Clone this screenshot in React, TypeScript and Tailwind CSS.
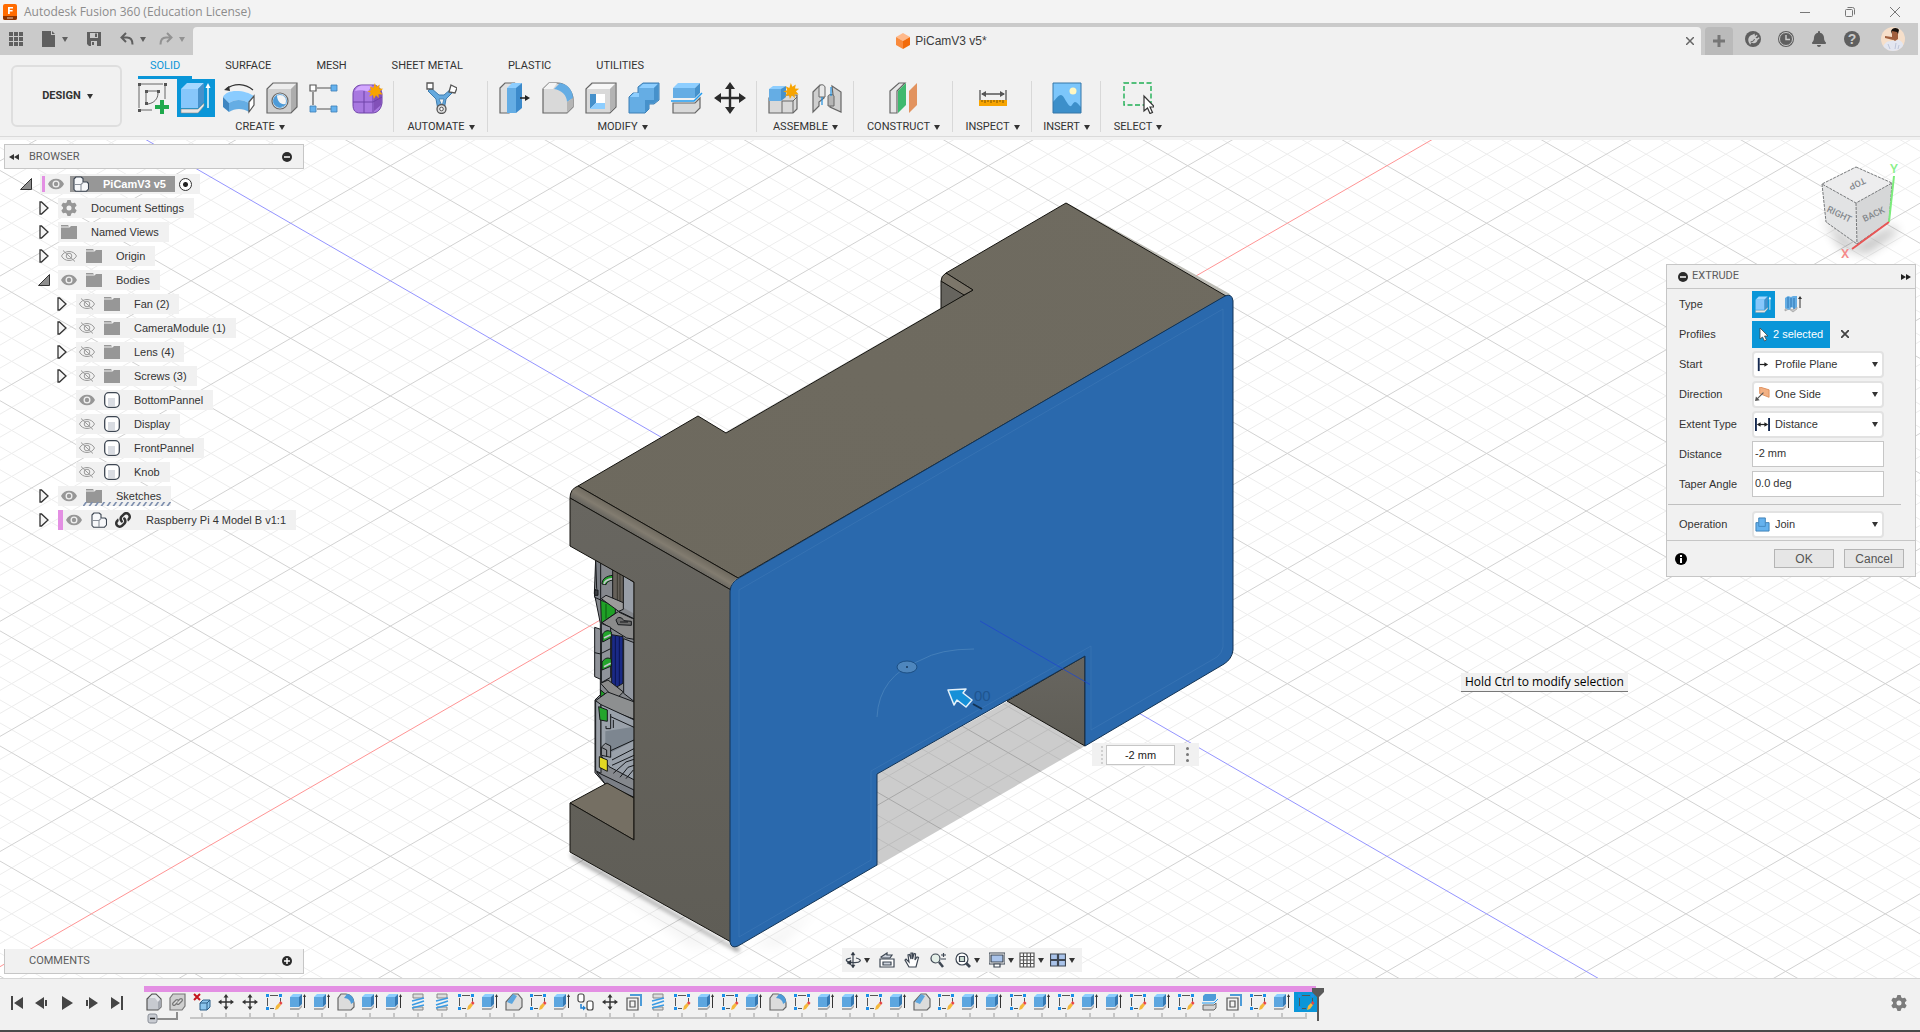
import type { ReactNode } from "react";
import { FaBell, FaLink } from "react-icons/fa";
import { FaGear } from "react-icons/fa6";

/* ---------- shared bits ---------- */

type IconProps = { className?: string };

const Caret = ({ className = "" }: IconProps) => (
  <svg viewBox="0 0 6 5" className={`w-[6px] h-[5px] shrink-0 ${className}`} fill="currentColor">
    <path d="M0 0h6L3 5z" />
  </svg>
);

const Star = () => (
  <path
    d="M23 1l1.6 4 3.6-2.4-.8 4.2 4.4.4-3.4 2.6 2.8 3.4-4.4-.4.4 4.2-3-3-2.2 3.8-1-4.2-4 1.6 1.8-3.8-3.8-1.6 4.2-1.2-1.6-4 3.8 1.6z"
    fill="#f7a400"
    transform="translate(1 0) scale(.95)"
  />
);

/* ---------- ribbon icons (32 x 32 grid) ---------- */

const SketchIcon = () => (
  <>
    <g fill="none" stroke="#666" strokeWidth="1">
      <path d="M4 2h22M2 4v22M28 4v13M4 28h11" />
      <path d="M9 11v9M11 9h9M21 11c0 6-4 10-10 11" />
    </g>
    <path fill="#555" d="M1 1h3v3H1zM27 1h3v3h-3zM1 27h3v3H1zM8 8h3v3H8zM20 8h3v3h-3zM8 20h3v3H8z" />
    <path fill="#1fa94c" d="M23 18h4v5h5v4h-5v5h-4v-5h-5v-4h5z" />
  </>
);

const ExtrudeIcon = () => (
  <>
    <path d="M1 27h17l6-6v3l-6 7H1z" fill="#e6e6e6" stroke="#888" strokeWidth=".6" />
    <path d="M1 7l6-6h17l-6 6z" fill="#a5d8ff" />
    <path d="M1 7h17v19H1z" fill="#87c7fb" />
    <path d="M18 7l6-6v19l-6 6z" fill="#4691cb" />
    <path d="M28 4v22" stroke="#fff" strokeWidth="1.4" />
    <path d="M25.5 6h5L28 1z" fill="#fff" />
  </>
);

const RevolveIcon = () => (
  <>
    <path d="M3 7c8-6 19-6 27 1" fill="none" stroke="#333" strokeWidth="1.2" />
    <path d="M1 8l5-4 1 5z" fill="#333" />
    <path d="M0 15c2-4 7-6 13-6 8 0 13 2 18 5l-5 7c-7-4-14-4-20 0z" fill="#8accff" />
    <path d="M0 15l6 6v9l-6-5z" fill="#3f86c1" />
    <path d="M6 21c6-4 13-4 20 0v9c-6-4-14-4-20 0z" fill="#65ade4" />
    <path d="M26 20l5-6v9l-5 7z" fill="#fff" stroke="#555" strokeWidth="1.2" />
  </>
);

const HoleIcon = () => (
  <>
    <path d="M1 7l6-6h24v24l-6 6H1z" fill="#cfcfcf" />
    <path d="M1 7l6-6h24l-6 6z" fill="#ededed" />
    <path d="M25 7l6-6v24l-6 6z" fill="#adadad" />
    <path d="M1 7l6-6h24v24l-6 6H1z" fill="none" stroke="#666" strokeWidth="1.2" />
    <circle cx="14" cy="19" r="8" fill="#f4f4f4" stroke="#666" strokeWidth="1.2" />
    <path d="M11 13a6.500 6.500 0 1 0 8.500 9c-5 1-8.500-3-8.500-9z" fill="#4d9bd8" />
    <circle cx="14" cy="19" r="6.5" fill="none" stroke="#4d9bd8" strokeWidth=".8" />
  </>
);

const PatternIcon = () => (
  <>
    <path d="M8 6h14M4 10v13M8 27h14" stroke="#555" strokeWidth="1.2" />
    <path d="M1 3h6v6H1z" fill="#fff" stroke="#555" strokeWidth="1.2" />
    <path d="M22 3h6v6h-6zM1 24h6v6H1zM22 24h6v6h-6z" fill="#65b2ee" stroke="#3c7fb5" strokeWidth=".8" />
  </>
);

const FormIcon = () => (
  <>
    <path d="M1 12c0-5 3-9 9-9h12c5 1 8 5 8 10v8c-1 6-4 10-10 10H8c-5 0-7-3-7-8z" fill="#a878e0" stroke="#6f42a8" />
    <path d="M3 9c2-4 4-5.500 8-5.500h9l-4 6C11 8 7 8 3 9z" fill="#d3a8ff" />
    <path d="M22 12l7-5c1 3 1 11 0 16l-7 6z" fill="#8250b8" />
    <path d="M12 9v22M1 20h20l9-5M21 10v20" fill="none" stroke="#6f42a8" />
    <Star />
  </>
);

const AutomateIcon = () => (
  <>
    <path d="M6 6l8 7h5l7-6 2 3-7 7-2 11h-6l-2-11-8-8z" fill="#65a9de" stroke="#3e7cae" />
    <path d="M14 17h5l-2 7z" fill="#f1f1f1" stroke="#3e7cae" strokeWidth=".8" />
    <path d="M2 1h6v6H2z" fill="#fff" stroke="#555" strokeWidth="1.3" />
    <path d="M26 3l6 3-2 5-6-1z" fill="#fff" stroke="#555" strokeWidth="1.3" />
    <circle cx="16.5" cy="27" r="4.5" fill="#ddd" stroke="#555" strokeWidth="1.3" />
    <circle cx="16.5" cy="27" r="1.8" fill="#fff" stroke="#555" />
  </>
);

const PressPullIcon = () => (
  <>
    <path d="M1 6l5-5h9l-5 5v25H1z" fill="#e0e0e0" stroke="#666" strokeWidth="1.2" />
    <path d="M8 6l5-5h10l-5 5z" fill="#8dceff" />
    <path d="M8 6h9v25H8z" fill="#65ade4" />
    <path d="M17 6l6-5v25l-6 5z" fill="#3c8acb" />
    <path d="M21 16h7" stroke="#222" strokeWidth="1.5" />
    <path d="M26 13l5 3-5 3z" fill="#222" />
  </>
);

const FilletIcon = () => (
  <>
    <path d="M1 7l6-6h8c9 0 16 8 16 17v7l-6 6H1z" fill="#d9d9d9" stroke="#666" strokeWidth="1.2" />
    <path d="M12 7l6-6c8 1 13 8 13 15l-6 4c0-7-6-12-13-13z" fill="#65ade4" />
    <path d="M25 20l6-4v9l-6 6z" fill="#b5b5b5" />
    <path d="M1 7l6-6h8L11 7z" fill="#f4f4f4" />
  </>
);

const ShellIcon = () => (
  <>
    <path d="M1 7l6-6h24v24l-6 6H1z" fill="#d9d9d9" stroke="#666" strokeWidth="1.2" />
    <path d="M2 7l6-5h22l-5 5z" fill="#f7f7f7" />
    <path d="M25 7l5-5v23l-5 5z" fill="#b3b3b3" />
    <path d="M5 12h15v15H5z" fill="#fff" />
    <path d="M5 12h6v9l-6 6z" fill="#4691cb" />
    <path d="M5 27l6-6h9v6z" fill="#8dceff" />
  </>
);

const CombineIcon = () => (
  <>
    <path d="M10 5l5-4h16v17l-5 4h-5v5l-4 4H1V15l4-4h5z" fill="#65ade4" stroke="#3c7fb5" />
    <path d="M11 6l4-4h15l-4 4zM2 15l4-4h5v4z" fill="#8dceff" />
    <path d="M26 6l4-4v16l-4 3h-5v6l-4 3V18h9z" fill="#4691cb" />
  </>
);

const SplitIcon = () => (
  <>
    <path d="M2 6l5-5h22l-5 5z" fill="#8dceff" />
    <path d="M2 6h22v10H2z" fill="#65ade4" />
    <path d="M24 6l5-5v10l-5 5z" fill="#4691cb" />
    <path d="M2 21h22l5-5v10l-5 5H2z" fill="#d9d9d9" stroke="#666" strokeWidth="1.2" />
    <path d="M0 19h23l8-8" fill="none" stroke="#1f9bf0" strokeWidth="1.5" />
  </>
);

const MoveIcon = () => (
  <>
    <path d="M16 4v24M4 16h24" stroke="#2b2b2b" strokeWidth="2.4" />
    <path d="M16 0l5 7H11zM16 32l5-7H11zM0 16l7-5v10zM32 16l-7-5v10z" fill="#2b2b2b" />
  </>
);

const ComponentIcon = () => (
  <>
    <path d="M1 16l4-3h24v14l-4 4H1z" fill="#d9d9d9" stroke="#666" strokeWidth="1.2" />
    <path d="M14 19v12M14 19h11l4-4M25 19v12" fill="none" stroke="#666" />
    <path d="M1 7l4-3h13l-4 3z" fill="#8dceff" />
    <path d="M1 7h12v12H1z" fill="#65ade4" />
    <path d="M13 7l5-3v11l-5 4z" fill="#4691cb" />
    <Star />
  </>
);

const JointIcon = () => (
  <>
    <path d="M2 10l7-7 4 3v10l-5 4v4l-6 6z" fill="#cfcfcf" stroke="#666" strokeWidth="1.2" />
    <path d="M21 4l9 6v20l-11-5V14l3-1z" fill="#cfcfcf" stroke="#666" strokeWidth="1.2" />
    <path d="M8 5c1-3 5-3 6 0v10H8z" fill="#e8e8e8" stroke="#666" />
    <path d="M17 14c1-2 5-2 6 0v10h-6z" fill="#b5b5b5" stroke="#666" />
    <path d="M11 15v8M20 5v9" stroke="#1f8fe0" strokeWidth="1.2" />
  </>
);

const ConstructIcon = () => (
  <>
    <path d="M2 9l9-8h6L9 9v22H2z" fill="#e6e6e6" stroke="#666" strokeWidth="1.2" />
    <path d="M10 9l8-8v22l-8 8z" fill="#3fb96e" />
    <path d="M21 9l8-8v22l-8 8z" fill="#e2935f" />
  </>
);

const InspectIcon = () => (
  <>
    <path d="M3 8v10M29 8v10M5 12h22" fill="none" stroke="#555" strokeWidth="1.3" />
    <path d="M4 12l5-3v6zM28 12l-5-3v6z" fill="#555" />
    <path d="M2 18h28v6H2z" fill="#f7a400" />
    <path d="M5 18v2M8 18v3M11 18v2M14 18v3M17 18v2M20 18v3M23 18v2M26 18v3" stroke="#7a5200" />
  </>
);

const InsertIcon = () => (
  <>
    <path d="M2 1h28v30H2z" fill="#7cc6fb" />
    <circle cx="22" cy="9" r="3.5" fill="#fff7c2" />
    <path d="M2 20c3-3 5-7 8-7s6 10 9 11c2 1 3-4 5-4s4 3 6 5v6H2z" fill="#3c8fca" />
    <path d="M2 1h28v30H2z" fill="none" stroke="#3577a8" />
  </>
);

const SelectIcon = () => (
  <>
    <path d="M2 1h27v22H2z" fill="none" stroke="#1faf54" strokeWidth="1.4" strokeDasharray="5 2.5" />
    <path d="M22 14v15l3.500-3 2.500 5.500 2.500-1-2.500-5.500h4.500z" fill="#fff" stroke="#333" strokeWidth="1.2" />
  </>
);

type Group = { label: string; width: string; icons: { name: string; art: ReactNode; active?: boolean }[] };

const groups: Group[] = [
  {
    label: "CREATE",
    width: "w-[268px]",
    icons: [
      { name: "Create Sketch", art: <SketchIcon /> },
      { name: "Extrude", art: <ExtrudeIcon />, active: true },
      { name: "Revolve", art: <RevolveIcon /> },
      { name: "Hole", art: <HoleIcon /> },
      { name: "Rectangular Pattern", art: <PatternIcon /> },
      { name: "Create Form", art: <FormIcon /> },
    ],
  },
  { label: "AUTOMATE", width: "w-[94px]", icons: [{ name: "Automated Modeling", art: <AutomateIcon /> }] },
  {
    label: "MODIFY",
    width: "w-[269px]",
    icons: [
      { name: "Press Pull", art: <PressPullIcon /> },
      { name: "Fillet", art: <FilletIcon /> },
      { name: "Shell", art: <ShellIcon /> },
      { name: "Combine", art: <CombineIcon /> },
      { name: "Split Body", art: <SplitIcon /> },
      { name: "Move/Copy", art: <MoveIcon /> },
    ],
  },
  {
    label: "ASSEMBLE",
    width: "w-[97px]",
    icons: [
      { name: "New Component", art: <ComponentIcon /> },
      { name: "Joint", art: <JointIcon /> },
    ],
  },
  { label: "CONSTRUCT", width: "w-[99px]", icons: [{ name: "Offset Plane", art: <ConstructIcon /> }] },
  { label: "INSPECT", width: "w-[79px]", icons: [{ name: "Measure", art: <InspectIcon /> }] },
  { label: "INSERT", width: "w-[69px]", icons: [{ name: "Canvas", art: <InsertIcon /> }] },
  { label: "SELECT", width: "w-[74px]", icons: [{ name: "Select Window", art: <SelectIcon /> }] },
];

const tabs = ["SOLID", "SURFACE", "MESH", "SHEET METAL", "PLASTIC", "UTILITIES"];

/* ---------- header ---------- */

function TitleBar() {
  return (
    <div className="flex items-center h-[23px] shrink-0 bg-[#f3f3f3]">
      <svg viewBox="0 0 14 16" className="w-[14px] h-4 ml-[3px] shrink-0">
        <rect width="14" height="16" rx="2" fill="#ff6b00" />
        <path d="M0 12h14v2a2 2 0 0 1-2 2H2a2 2 0 0 1-2-2z" fill="#8a3200" />
        <path d="M5 10V3h5v1.500H6.800v1.600h2.800v1.400H6.800V10z" fill="#fff" />
        <path d="M4 14h6" stroke="#e8c9b0" />
      </svg>
      <h1 className="ml-[7px] text-[12px] text-[#8c8c8c] font-['Open_Sans','Noto_Sans',sans-serif]">
        Autodesk Fusion 360 (Education License)
      </h1>
      <div className="flex ml-auto mr-[2px] text-[#777]">
        <button aria-label="Minimize" className="flex w-[45px] h-5 items-center justify-center">
          <svg viewBox="0 0 12 12" className="w-3 h-3" stroke="currentColor" fill="none"><path d="M1 6.500h10" /></svg>
        </button>
        <button aria-label="Restore" className="flex w-[45px] h-5 items-center justify-center">
          <svg viewBox="0 0 12 12" className="w-3 h-3" stroke="currentColor" fill="none">
            <rect x="1.5" y="3.5" width="7" height="7" rx="1" />
            <path d="M3.500 1.500h5a2 2 0 0 1 2 2v5" />
          </svg>
        </button>
        <button aria-label="Close" className="flex w-[46px] h-5 items-center justify-center">
          <svg viewBox="0 0 12 12" className="w-3 h-3" stroke="currentColor" fill="none"><path d="M1 1l10 10M11 1L1 11" /></svg>
        </button>
      </div>
    </div>
  );
}

function QuickBar() {
  return (
    <div className="flex h-8 shrink-0 mr-[2px] bg-[#cacaca] text-[#5f5f5f]">
      <div className="flex items-center w-[193px] shrink-0">
        <button aria-label="Data Panel" className="ml-[9px]">
          <svg viewBox="0 0 14 14" className="w-[14px] h-[14px]" fill="currentColor">
            <path d="M0 0h4v4H0zM5 0h4v4H5zM10 0h4v4h-4zM0 5h4v4H0zM5 5h4v4H5zM10 5h4v4h-4zM0 10h4v4H0zM5 10h4v4H5zM10 10h4v4h-4z" />
          </svg>
        </button>
        <button aria-label="File" className="flex items-center gap-[7px] ml-[19px]">
          <svg viewBox="0 0 13 16" className="w-[13px] h-4" fill="currentColor"><path d="M0 0h9v4h4v12H0zM10 0l3 3h-3z" /></svg>
          <Caret />
        </button>
        <button aria-label="Save" className="ml-[19px]">
          <svg viewBox="0 0 14 14" className="w-[14px] h-[14px]">
            <path d="M0 0h14v14H2l-2-2z" fill="#5f5f5f" />
            <path d="M3 1h8v5H3zM4 9h6v5H4z" fill="#cacaca" />
            <path d="M8 1.500h2V5H8zM5 10h2v3H5z" fill="#5f5f5f" />
          </svg>
        </button>
        <button aria-label="Undo" className="flex items-center gap-[6px] ml-[19px]">
          <svg viewBox="0 0 14 14" className="w-[14px] h-[14px]" fill="none" stroke="currentColor" strokeWidth="2">
            <path d="M6 1L1.500 5.500 6 10M2 5.500h5c3.500 0 5.500 2.500 5.500 7" />
          </svg>
          <Caret />
        </button>
        <button aria-label="Redo" className="flex items-center gap-[6px] ml-[13px] text-[#929292]">
          <svg viewBox="0 0 14 14" className="w-[14px] h-[14px]" fill="none" stroke="currentColor" strokeWidth="2">
            <path d="M8 1l4.500 4.500L8 10M12 5.500H7C3.500 5.500 1.500 8 1.500 12.500" />
          </svg>
          <Caret />
        </button>
      </div>
      <div className="flex flex-1 items-center mt-1 bg-[#f1f1f1] rounded-t">
        <div className="flex flex-1 items-center justify-center gap-[5px] pl-1 text-[12px] text-[#3c3c3c]">
          <svg viewBox="0 0 14 16" className="w-[14px] h-4">
            <path d="M7 0l7 4-7 4-7-4z" fill="#ffb98a" />
            <path d="M0 4l7 4v8l-7-4z" fill="#f98a3c" />
            <path d="M14 4L7 8v8l7-4z" fill="#f26a0a" />
          </svg>
          <span>PiCamV3 v5*</span>
        </div>
        <button aria-label="Close tab" className="mr-[7px] text-[#666]">
          <svg viewBox="0 0 8 8" className="w-2 h-2" stroke="currentColor" strokeWidth="1.5"><path d="M0 0l8 8M8 0L0 8" /></svg>
        </button>
      </div>
      <button aria-label="New tab" className="flex items-center justify-center w-7 mt-1 ml-1 bg-[#bababa] rounded-t text-[#767676]">
        <svg viewBox="0 0 12 12" className="w-3 h-3" stroke="currentColor" strokeWidth="3"><path d="M6 0v12M0 6h12" /></svg>
      </button>
      <div className="flex items-center gap-[17px] pl-3 pr-[13px]">
        <button aria-label="Extensions">
          <svg viewBox="0 0 16 16" className="w-4 h-4">
            <circle cx="8" cy="8" r="8" fill="#5f5f5f" />
            <path d="M4.500 12.500C2 9 3.500 4 8 3.500l1.500-1 .5 2.500 2-1.500.5 1.500-2 1.500 1.500 1 2-1.500.5 1.500-2 1.500c0 3-4 4-6 2.500L5 14z" fill="#cacaca" />
            <path d="M5.500 11l3-1 1-2" stroke="#5f5f5f" strokeWidth="1" fill="none" />
          </svg>
        </button>
        <button aria-label="Job Status">
          <svg viewBox="0 0 16 16" className="w-4 h-4">
            <circle cx="8" cy="8" r="8" fill="#5f5f5f" />
            <circle cx="8" cy="8" r="6.5" fill="none" stroke="#cacaca" />
            <path d="M8 4v4.500h4" stroke="#cacaca" strokeWidth="1.5" fill="none" />
          </svg>
        </button>
        <button aria-label="Notifications"><FaBell className="w-4 h-4" /></button>
        <button aria-label="Help" className="w-4 h-4 rounded-full bg-[#5f5f5f] text-[#cacaca] text-[14px] leading-4 font-bold">?</button>
        <button aria-label="Account" className="ml-1">
          <svg viewBox="0 0 24 24" className="w-6 h-6">
            <clipPath id="face"><circle cx="12" cy="12" r="12" /></clipPath>
            <g clipPath="url(#face)">
              <path d="M0 0h24v24H0z" fill="#f6dfca" />
              <path d="M2 24c-1-7 4-10 8-10l8-1c5 2 5 7 3 11z" fill="#e3e6f0" />
              <path d="M4 9l7 1 1 3-8-2zM11 4h6v8l-3 2-3-2z" fill="#a05f3e" />
              <path d="M10 5c0-5 7-5 8-2l-1 4-1-2-5-1-1 3z" fill="#17120f" />
              <path d="M7 17l2 5M15 16l-1 6M18 18l-1 4" stroke="#bcc4d8" />
            </g>
          </svg>
        </button>
      </div>
    </div>
  );
}

function Ribbon() {
  return (
    <div className="flex h-[82px] shrink-0 bg-[#f1f1f1] border-b border-[#dadada] font-[Roboto,Arial,sans-serif] text-[11px] text-[#333]">
      <button className="flex items-center justify-center gap-[6px] w-[111px] h-[62px] mt-[10px] ml-[11px] pl-[2px] pt-px border-2 border-[#dedede] rounded-md font-bold">
        DESIGN <Caret />
      </button>
      <div className="flex flex-col ml-1">
        <div role="tablist" className="flex gap-[21px] h-6 pl-3">
          {tabs.map((tab, i) => (
            <button
              key={tab}
              role="tab"
              aria-selected={i === 0}
              className={
                i === 0
                  ? "px-3 border-b-[3px] border-[#0a96d8] text-[#0a96d8] leading-[22px]"
                  : "px-3 border-b-[3px] border-transparent leading-[22px]"
              }
            >
              {tab}
            </button>
          ))}
        </div>
        <div className="flex flex-1">
          {groups.map((group, i) => (
            <div key={group.label} className={`relative flex flex-col items-center ${group.width}`}>
              <div className="flex gap-[5px]">
                {group.icons.map((icon) => (
                  <button
                    key={icon.name}
                    aria-label={icon.name}
                    className={`flex items-center justify-center w-[38px] h-[38px] ${icon.active ? "bg-[#0a96d8]" : ""}`}
                  >
                    <svg viewBox="0 0 32 32" className="w-8 h-8">{icon.art}</svg>
                  </button>
                ))}
              </div>
              <button className="flex items-center gap-1 leading-5">
                {group.label} <Caret />
              </button>
              {i < groups.length - 1 && <span className="absolute right-0 top-[2px] w-px h-[51px] bg-[#d8d8d8]" />}
            </div>
          ))}
        </div>
      </div>
    </div>
  );
}

/* ---------- 3D canvas ---------- */

// isometric ground grid: origin and one major step along each axis
const OX = 789;
const OY = 511;
const DX = 99.66;
const DY = 57.55;

function gridPath(major: boolean) {
  const parts: string[] = [];
  const rise = (DY / DX) * 1400;
  for (let i = -110; i <= 110; i++) {
    if ((i % 5 === 0) !== major || i === 0) continue;
    // every line crosses the vertical through the origin at a multiple of the spacing
    const y = OY + (i / 5) * 2 * DY;
    parts.push(`M${OX - 1400} ${y - rise}L${OX + 1400} ${y + rise}`);
    parts.push(`M${OX - 1400} ${y + rise}L${OX + 1400} ${y - rise}`);
  }
  return parts.join("");
}

const minorGrid = gridPath(false);
const majorGrid = gridPath(true);

const Connectors = () => (
  <g transform="translate(580 540) scale(.3333)" stroke="#15171a" strokeWidth="3" strokeLinejoin="round">
    <path d="M47 58l116 70v648l-86-42-32-36V480l16-16V250l-18-90z" fill="#85888d" />
    <path d="M47 60l15 8v112l-18-8v-20l6-6z" fill="#7b7f86" />
    <path d="M44 150h10v16H44z" fill="#3b3e42" />
    {/* upper USB port */}
    <path d="M66 132c0-16 14-24 32-26v14c-12 2-18 6-20 14z" fill="#24a52c" />
    <path d="M72 132c2-10 12-14 26-16" fill="none" stroke="#c4c6cb" strokeWidth="5" />
    <path d="M98 88l32 14v88l-32-12z" fill="#66615a" />
    <path d="M112 96v88M120 100v86" stroke="#3a372f" />
    <path d="M132 108l28 20v92l-28-16z" fill="#989ea7" stroke="none" />
    <path d="M62 180l44 20v20l-42 30z" fill="#1fa026" />
    <path d="M78 192v44" stroke="#0d5a12" />
    <path d="M64 176l14-10 52 22v20l-14 6z" fill="#9b9b9b" />
    <path d="M66 248l50-34 46 22v62l-22-4z" fill="#8b8b8b" />
    <path d="M108 240c6-12 18-8 24 2l22 2v12l-40-2zM116 216l42 20M120 246h24" fill="#6c6c6c" />
    {/* lower USB port */}
    <path d="M64 250l28 12v150l-28 16z" fill="#8f939a" />
    <path d="M68 282c8-12 18-12 26-6v16l-26 14zM66 366c10-14 20-14 28-8v20l-28 12z" fill="#24a52c" />
    <path d="M72 294l20-10M72 380l20-10" fill="none" stroke="#c4c6cb" strokeWidth="5" />
    <path d="M64 340l28-14" />
    <path d="M44 262l18 6v150l-18-8zM44 338l18 4" fill="#8f9298" />
    <path d="M95 284l34 6v140l-20 12-14-10z" fill="#1a2a86" />
    <path d="M106 288v150M118 290v146" stroke="#0c1450" />
    <path d="M131 296l31 12v176l-31-24z" fill="#9297a0" />
    <path d="M62 430l22-10 46 36-14 14-20-2z" fill="#8b8b8b" />
    <path d="M62 450l14 12-14 10z" fill="#1fa026" />
    {/* ethernet jack */}
    <path d="M47 482l36-26 80 30v52l-100-38z" fill="#8d8f90" />
    <path d="M47 482l16 12v206l-16-8z" fill="#9ba0a8" />
    <path d="M63 494l100 46v180l-76-40-24-34z" fill="#9aa1aa" />
    <path d="M76 574l86-14v42l-66 34-20-22z" fill="#7d8690" stroke="none" />
    <path d="M92 522v44h-14v-8M92 530l70 32M100 540v24" fill="none" />
    <path d="M92 632l70-32M96 660l66-34M96 676l66-30" fill="none" />
    <path d="M100 700l38-34 24-8M120 712l24-30 18-6M138 716l22-26" fill="none" />
    <path d="M56 500l26 10v34l-22-4z" fill="#24a52c" />
    <path d="M64 622l12-12 16 8v34l-28-6z" fill="#8f9298" />
    <path d="M64 622l16 8v20" fill="none" />
    <path d="M58 650l24 10v34l-24-12z" fill="#e2d822" />
    <path d="M50 696l112 54v22l-88-42z" fill="#7b7f86" />
    <path d="M163 128v650" />
  </g>
);

const Model = () => (
  <g strokeLinejoin="round">
    <path d="M573 858L731 949l9 4 80-46-40 40H690z" fill="#000" opacity=".04" filter="url(#soft)" />
    <path d="M570 853l160 92 10 3-2 4-166-94z" fill="#000" opacity=".45" filter="url(#tight)" />
    <path d="M1067 203l163 91-2 4-162-94z" fill="#bdbcb5" />
    {/* cut-out: floor shadow and inner wall */}
    <path d="M877 774l131-73 77 45-208 120z" fill="#000" opacity=".2" />
    <path d="M1007 701l78-45v90z" fill="url(#side)" stroke="#14130f" />
    {/* recess behind the ports */}
    <path d="M607 783l27-20v77z" fill="#756f63" />
    <Connectors />
    <path d="M570 803l37-20 27 15v42z" fill="#756f63" stroke="#14130f" />
    <path d="M941 281v28l24-14z" fill="#66645e" stroke="#14130f" />
    {/* top */}
    <path
      d="M578 486l120-70 28 17 247-143-27-17 120-70 160 93-488 282z"
      fill="url(#top)"
      stroke="#14130f"
    />
    <path d="M941 281q0-5 5-8l27 17-9 5z" fill="#7c766a" stroke="#14130f" />
    {/* rounded edge */}
    <path d="M570 498q0-9 8-12l160 92q-8 5-7 12z" fill="url(#fillet)" />
    <path d="M570 498q0-9 8-12l160 92M570 498l161 92" fill="none" stroke="#14130f" />
    {/* left wall */}
    <path d="M570 498l161 92v352L570 852v-49l64 37V582l-64-36z" fill="url(#side)" stroke="#14130f" />
    {/* selected profile */}
    <path
      d="M739 578l486-282q7-3 8 5v349q-1 9-9 14l-139 82v-90L877 774v91l-139 81q-7 3-8-4V591q1-9 9-13z"
      fill="#2a69ad"
      stroke="#123354"
    />
    <path
      d="M739 590l484-281v338q-1 6-6 10l-126 73v-84L871 771v89l-132 77z"
      fill="none"
      stroke="#3f7ab8"
      opacity=".55"
    />
    <path d="M974 649q-34 0-53 11-42 16-44 57" fill="none" stroke="#4f87bd" opacity=".7" />
    <ellipse cx="907" cy="667" rx="10" ry="6" fill="#4e86bd" stroke="#1c4f84" />
    <circle cx="907" cy="667" r="1" fill="#16365c" />
    <path d="M980 621l110 63.500" stroke="#2048cc" opacity=".8" />
    <text x="974" y="701" fontSize="15" fill="#1f5590" className="font-['Liberation_Sans',Arial,sans-serif]">00</text>
    <path d="M973 704l9 5" stroke="#123354" strokeWidth="2" />
    <path d="M948 690l18-1-3 4 9 7-6 7-9-7-3 5z" fill="#1590d8" stroke="#e4f1fa" strokeWidth="1.5" />
  </g>
);

const ViewCube = () => (
  <g className="font-[Roboto,Arial,sans-serif]" fontWeight="500">
    <path d="M1822 215l34 32 36-20 6 4-32 22-24-6z" fill="#000" opacity=".3" filter="url(#soft)" />
    <path d="M1856 167l36 16-36 20-34-19z" fill="#ededee" />
    <path d="M1822 184l34 19 1 41-31-22z" fill="#e2e3e4" />
    <path d="M1892 183l-36 20 1 41 32-22z" fill="#d6d7d8" />
    <path d="M1856 167l36 16-36 20-34-19zM1856 203l1 41M1822 184l4 38 31 22 32-22 3-39" fill="none" stroke="#77797b" strokeDasharray="3 1" />
    <g fontSize="9" fill="#84888c" textAnchor="middle">
      <text transform="translate(1838 217) rotate(26)">RIGHT</text>
      <text transform="translate(1875 217) rotate(-26)">BACK</text>
      <text transform="translate(1856 181) rotate(155)">TOP</text>
    </g>
    <path d="M1889 222l5-46" stroke="#7cec7c" strokeWidth="2" />
    <path d="M1889 222l-37 27" stroke="#e85555" strokeWidth="2" />
    <text x="1890" y="173" fontSize="13" fill="#8af08a">Y</text>
    <text x="1841" y="258" fontSize="13" fill="#f58a8a">X</text>
  </g>
);

const Scene = () => (
  <svg viewBox="0 140 1920 838" preserveAspectRatio="xMidYMid slice" className="absolute inset-0 w-full h-full">
    <defs>
      <linearGradient id="top" x1="0" y1="1" x2="1" y2="0">
        <stop offset="0" stopColor="#6d695e" />
        <stop offset="1" stopColor="#6f6b60" />
      </linearGradient>
      <linearGradient id="side" x1="0" y1="0" x2="0" y2="1">
        <stop offset="0" stopColor="#686660" />
        <stop offset="1" stopColor="#5f5d56" />
      </linearGradient>
      <linearGradient id="fillet" gradientUnits="userSpaceOnUse" x1="658" y1="532" x2="651" y2="544">
        <stop offset="0" stopColor="#6f6a5f" />
        <stop offset=".55" stopColor="#827c70" />
        <stop offset="1" stopColor="#686660" />
      </linearGradient>
      <filter id="soft" x="-20%" y="-20%" width="140%" height="140%"><feGaussianBlur stdDeviation="6" /></filter>
      <filter id="tight" x="-20%" y="-20%" width="140%" height="140%"><feGaussianBlur stdDeviation="2" /></filter>
    </defs>
    <path d={minorGrid} stroke="#ededed" />
    <path d={majorGrid} stroke="#d2d2d2" />
    <path d={`M${OX - 1400} ${OY + 808.5}L${OX + 1400} ${OY - 808.5}`} stroke="#ff9494" />
    <path d={`M${OX - 1400} ${OY - 808.5}L${OX + 1400} ${OY + 808.5}`} stroke="#9494ff" />
    <Model />
    <ViewCube />
  </svg>
);

/* ---------- browser tree ---------- */

const Eye = () => (
  <svg viewBox="0 0 16 12" className="w-4 h-3">
    <path d="M0 6c3-7 13-7 16 0-3 7-13 7-16 0z" fill="#979797" />
    <circle cx="8" cy="6" r="3.5" fill="#f1f1f1" />
    <circle cx="8" cy="6" r="2.2" fill="#979797" />
  </svg>
);

const HiddenEye = () => (
  <svg viewBox="0 0 16 12" className="w-4 h-3" fill="none" stroke="#9a9a9a">
    <path d="M.5 6c3-6 12-6 15 0-3 6-12 6-15 0z" />
    <circle cx="8" cy="6" r="2.8" />
    <path d="M2 .5l12 11" />
  </svg>
);

const Folder = () => (
  <svg viewBox="0 0 16 14" className="w-4 h-[14px]" fill="#979797">
    <path d="M0 0h7l1 1.500H0zM0 2.500h8.500L10 1h6v13H0z" />
  </svg>
);

const Body = () => (
  <svg viewBox="0 0 16 16" className="w-4 h-4">
    <rect x=".7" y=".7" width="14.6" height="14.6" rx="4" fill="#fff" stroke="#3d4652" strokeWidth="1.3" />
    <path d="M4 6h7v8H4z" fill="#d9dce2" />
  </svg>
);

const Part = () => (
  <svg viewBox="0 0 16 16" className="w-4 h-4" fill="#f7f8fa" stroke="#3d4652" strokeWidth="1.1" strokeLinejoin="round">
    <path d="M1 3l2-2h5l2 1.500V6h4l1.500 1.500V13l-2 2.200H2.500L1 13.500z" />
    <path d="M1.500 8.500H8l2-2M8 8.500V15" fill="none" stroke="#8b919a" />
  </svg>
);

const Expand = ({ open }: { open: boolean }) =>
  open ? (
    <svg viewBox="0 0 12 12" className="w-3 h-3"><path d="M11.500.5v11H.5z" fill="#8d8d8d" stroke="#333" /></svg>
  ) : (
    <svg viewBox="0 0 10 14" className="w-[10px] h-[14px]"><path d="M1 1h1.500L9 7l-6.500 6H1z" fill="#f4f4f4" stroke="#333" strokeWidth="1.3" /></svg>
  );

type TreeItem = {
  label: string;
  indent: 1 | 2;
  icon: "gear" | "folder" | "body";
  eye?: "on" | "off";
  open?: boolean;
  sketchy?: boolean;
};

const tree: TreeItem[] = [
  { label: "Document Settings", indent: 1, icon: "gear", open: false },
  { label: "Named Views", indent: 1, icon: "folder", open: false },
  { label: "Origin", indent: 1, icon: "folder", eye: "off", open: false },
  { label: "Bodies", indent: 1, icon: "folder", eye: "on", open: true },
  { label: "Fan (2)", indent: 2, icon: "folder", eye: "off", open: false },
  { label: "CameraModule (1)", indent: 2, icon: "folder", eye: "off", open: false },
  { label: "Lens (4)", indent: 2, icon: "folder", eye: "off", open: false },
  { label: "Screws (3)", indent: 2, icon: "folder", eye: "off", open: false },
  { label: "BottomPannel", indent: 2, icon: "body", eye: "on" },
  { label: "Display", indent: 2, icon: "body", eye: "off" },
  { label: "FrontPannel", indent: 2, icon: "body", eye: "off" },
  { label: "Knob", indent: 2, icon: "body", eye: "off" },
  { label: "Sketches", indent: 1, icon: "folder", eye: "on", open: false, sketchy: true },
];

function TreeRow({ item }: { item: TreeItem }) {
  return (
    <li className={`flex items-center h-6 ${item.indent === 1 ? "pl-8" : "pl-[50px]"}`}>
      <button aria-label={`Toggle ${item.label}`} className="flex justify-center w-4 mr-[6px]">
        {item.open !== undefined && <Expand open={item.open} />}
      </button>
      <div className="relative flex items-center h-5 pr-[10px] bg-[#f1f1f1]">
        {item.eye && (
          <button aria-label={`Visibility of ${item.label}`} className="flex justify-center w-[22px]">
            {item.eye === "on" ? <Eye /> : <HiddenEye />}
          </button>
        )}
        <span className={item.eye ? "flex justify-center w-7 mr-2" : "flex justify-center w-[22px] mr-[11px]"}>
          {item.icon === "gear" && <FaGear className="w-4 h-4 text-[#979797]" />}
          {item.icon === "folder" && <Folder />}
          {item.icon === "body" && <Body />}
        </span>
        <span>{item.label}</span>
        {item.sketchy && (
          <svg viewBox="0 0 88 5" className="absolute left-[25px] bottom-0 w-[88px] h-[5px]">
            <path d="M0 4h88" stroke="#7d8fae" strokeWidth="4" strokeDasharray="2 4" transform="skewX(-35) translate(3 -1)" />
          </svg>
        )}
      </div>
    </li>
  );
}

function BrowserPanel() {
  return (
    <div className="absolute left-1 top-1 w-[300px] text-[11px] text-[#333]">
      <div className="flex items-center h-[25px] pl-1 pr-[11px] mb-[3px] bg-[#f1f1f1] border border-[#c6c6c6]">
        <svg viewBox="0 0 10 6" className="w-[10px] h-[6px]" fill="#333"><path d="M5 0v6L0 3zM10 0v6L5 3z" /></svg>
        <h2 className="ml-[10px] pt-px font-[Roboto,Arial,sans-serif] text-[#5c5c5c]">BROWSER</h2>
        <button aria-label="Collapse browser" className="ml-auto">
          <svg viewBox="0 0 10 10" className="w-[10px] h-[10px]"><circle cx="5" cy="5" r="5" fill="#2b2b2b" /><path d="M2 5h6" stroke="#fff" strokeWidth="1.5" /></svg>
        </button>
      </div>
      <ul>
        <li className="flex items-center h-6 pl-[14px]">
          <button aria-label="Toggle PiCamV3 v5" className="flex justify-center w-4 mr-[6px]"><Expand open /></button>
          <div className="flex items-center h-5 pl-[2px] bg-[#f1f1f1]">
            <span className="w-[3px] h-4 bg-[#e38fe3]" />
            <button aria-label="Visibility of PiCamV3 v5" className="flex pl-[3px] w-[25px]"><Eye /></button>
            <span className="flex items-center gap-[14px] h-4 pl-[3px] pr-[9px] bg-[#979797] text-white font-bold">
              <Part /> PiCamV3 v5
            </span>
            <label className="flex pl-1 w-[25px]">
              <input
                type="radio"
                name="active-component"
                aria-label="Activate component"
                defaultChecked
                className="appearance-none w-[13px] h-[13px] rounded-full border border-[#333] bg-[radial-gradient(circle,#222_2px,#fff_3px)]"
              />
            </label>
          </div>
        </li>
        {tree.map((item) => (
          <TreeRow key={item.label} item={item} />
        ))}
        <li className="flex items-center h-6 pl-8">
          <button aria-label="Toggle Raspberry Pi" className="flex justify-center w-4 mr-[6px]"><Expand open={false} /></button>
          <div className="flex items-center h-5 pr-[10px] bg-[#f1f1f1]">
            <span className="w-[5px] h-5 bg-[#e38fe3]" />
            <button aria-label="Visibility of Raspberry Pi" className="flex justify-center w-[22px]"><Eye /></button>
            <span className="flex justify-center w-7"><Part /></span>
            <span className="flex w-[23px] mr-[10px] pl-[2px]"><FaLink className="w-4 h-4 text-[#333]" /></span>
            <span>Raspberry Pi 4 Model B v1:1</span>
          </div>
        </li>
      </ul>
    </div>
  );
}

/* ---------- extrude dialog ---------- */

const dropdownArt: Record<string, ReactNode> = {
  start: (
    <>
      <path d="M4 1v14" stroke="#14284f" strokeWidth="2" />
      <path d="M5 8h6" stroke="#222" strokeWidth="1.3" />
      <path d="M10 5.500L14 8l-4 2.500z" fill="#222" />
    </>
  ),
  direction: (
    <>
      <path d="M5 0l10 3v8L5 7z" fill="#f3b184" stroke="#dd8f5c" />
      <path d="M9 6l-7 7" stroke="#555" strokeWidth="1.2" />
      <path d="M0 15l1-5 4 4z" fill="#555" />
    </>
  ),
  extent: (
    <>
      <path d="M1 1v14M15 1v14" stroke="#14284f" strokeWidth="2" />
      <path d="M3 8h10" stroke="#222" strokeWidth="1.3" />
      <path d="M2 8l4-2.500v5zM14 8l-4-2.500v5z" fill="#222" />
    </>
  ),
  operation: (
    <>
      <path d="M4 1h7v5h4v9H1V6h3z" fill="#65b2ee" stroke="#3c7fb5" />
      <path d="M4 6v4h7V6" fill="none" stroke="#3c7fb5" strokeWidth=".8" />
    </>
  ),
};

function Field({ id, label, children }: { id: string; label: string; children: ReactNode }) {
  return (
    <div className="flex items-center h-[30px]">
      <label htmlFor={id} className="w-[73px] shrink-0">{label}</label>
      {children}
    </div>
  );
}

function Dropdown({ id, label, value }: { id: string; label: string; value: string }) {
  return (
    <Field id={id} label={label}>
      <div className="relative w-[132px]">
        <select id={id} defaultValue={value} className="appearance-none w-full h-[27px] pl-[21px] bg-white border-2 border-[#e2e2e2] rounded-sm">
          <option>{value}</option>
        </select>
        <svg viewBox="0 0 16 16" className="absolute left-[3px] top-[6px] w-[15px] h-[15px] pointer-events-none">{dropdownArt[id]}</svg>
        <Caret className="absolute right-[6px] top-[11px] pointer-events-none" />
      </div>
    </Field>
  );
}

function ExtrudePanel() {
  return (
    <form className="absolute right-1 top-[124px] w-[250px] bg-[#f1f1f1] border border-[#c6c6c6] text-[11px] text-[#333]">
      <div className="flex items-center h-6 pl-[11px] pr-1 border-b border-[#c6c6c6]">
        <svg viewBox="0 0 10 10" className="w-[10px] h-[10px]"><circle cx="5" cy="5" r="5" fill="#2b2b2b" /><path d="M2 5h6" stroke="#fff" strokeWidth="1.5" /></svg>
        <h2 className="ml-1 font-[Roboto,Arial,sans-serif] text-[#5c5c5c]">EXTRUDE</h2>
        <svg viewBox="0 0 10 6" className="w-[10px] h-[6px] ml-auto" fill="#222"><path d="M0 0v6l5-3zM5 0v6l5-3z" /></svg>
      </div>
      <div className="pl-3">
        <Field id="type" label="Type">
          <button id="type" type="button" aria-label="Extrude" className="flex items-center justify-center w-[23px] h-[27px] bg-[#0a96d8]">
            <svg viewBox="0 0 32 32" className="w-[17px] h-[17px]"><ExtrudeIcon /></svg>
          </button>
          <button type="button" aria-label="Thin Extrude" className="flex items-center justify-center w-[23px] h-[27px] ml-[6px]">
            <svg viewBox="0 0 18 18" className="w-[18px] h-[18px]">
              <path d="M1 14l3-2 4 3 5-3v2l-4 3-4-3-4 2z" fill="#c8c8c8" stroke="#888" strokeWidth=".5" />
              <path d="M1 3l3-2 3 1 2-1h4v11l-3 2-2-2-3 3-4-2z" fill="#65ade4" />
              <path d="M4 2v11M7 3v9M10 3v11" stroke="#2f77b4" />
              <path d="M16 3v10" stroke="#333" />
              <path d="M14 4h4l-2-3z" fill="#333" />
            </svg>
          </button>
        </Field>
        <Field id="profiles" label="Profiles">
          <button id="profiles" type="button" className="flex items-center gap-1 h-[27px] w-[78px] pl-[7px] bg-[#0a96d8] text-white whitespace-nowrap">
            <svg viewBox="0 0 10 15" className="w-[10px] h-[15px] shrink-0"><path d="M1 1v11l2.500-2 2 4 2-1-2-4h3.500z" fill="#fff" stroke="#444" strokeWidth=".8" /></svg>
            2 selected
          </button>
          <button type="button" aria-label="Clear selection" className="ml-[11px]">
            <svg viewBox="0 0 8 8" className="w-2 h-2" stroke="#444" strokeWidth="1.8"><path d="M0 0l8 8M8 0L0 8" /></svg>
          </button>
        </Field>
        <Dropdown id="start" label="Start" value="Profile Plane" />
        <Dropdown id="direction" label="Direction" value="One Side" />
        <Dropdown id="extent" label="Extent Type" value="Distance" />
        <Field id="distance" label="Distance">
          <input id="distance" defaultValue="-2 mm" className="w-[132px] h-[26px] px-[2px] pb-[2px] bg-white border border-[#c6c6c6]" />
        </Field>
        <Field id="taper" label="Taper Angle">
          <input id="taper" defaultValue="0.0 deg" className="w-[132px] h-[26px] px-[2px] pb-[2px] bg-white border border-[#c6c6c6]" />
        </Field>
      </div>
      <hr className="mt-[5px] mb-[4px] ml-px mr-[14px] border-[#c0c0c0]" />
      <div className="pl-3">
        <Dropdown id="operation" label="Operation" value="Join" />
      </div>
      <div className="flex items-center h-9 mt-px pl-2 pr-[11px] border-t border-[#c6c6c6] text-[12px] text-[#555]">
        <svg viewBox="0 0 12 12" className="w-3 h-3"><circle cx="6" cy="6" r="6" fill="#000" /><path d="M5 5h2v5H5zM5 2h2v2H5z" fill="#fff" /></svg>
        <button type="button" className="w-[60px] h-[19px] ml-auto bg-[#e6e6e6] border border-[#b4b4b4] leading-4">OK</button>
        <button type="button" className="w-[60px] h-[19px] ml-[10px] bg-[#e6e6e6] border border-[#b4b4b4] leading-4">Cancel</button>
      </div>
    </form>
  );
}

/* ---------- view navigation ---------- */

const navTools: { name: string; cell: string; caret?: boolean; art: ReactNode }[] = [
  {
    name: "Orbit",
    cell: "w-[34px]",
    caret: true,
    art: (
      <>
        <path d="M8 1v14M6 6c-7 1-6 4 2 4.500s10-3 3-4.500" />
        <path d="M6 3l2-3 2 3zM6 13l2 3 2-3zM6 8l-4 3 4 2z" fill="#2b323c" strokeWidth=".5" />
      </>
    ),
  },
  { name: "Look At", cell: "w-[25px]", art: <><path d="M1 7h14v8H1z" fill="#fff" /><path d="M4 10h8v3H4z" fill="#cdd3dc" /><path d="M2 5l6-4v2h5l-2 3H3z" fill="#cdd3dc" /></> },
  { name: "Pan", cell: "w-[26px]", art: <path d="M5 15L1 8l1-1 3 3-1-7 1.500-.5L7 7V1h1.500v6L10 1.500l1.500.5-.5 6 2-3 1.500.5L12 15z" fill="#fff" /> },
  { name: "Zoom", cell: "w-[25px]", art: <><circle cx="5.5" cy="6.5" r="4.5" fill="#e4efe8" /><path d="M9 10l4 5" strokeWidth="2.5" /><path d="M11 3h5M13.500 1v4M11 7h5" /></> },
  { name: "Fit", cell: "w-[34px]", caret: true, art: <><circle cx="7" cy="7" r="6" fill="#fff" /><path d="M4.500 4.500h5v5h-5z" fill="#cfe0d6" /><path d="M11 11l4 4" strokeWidth="2.8" /></> },
  { name: "Display Settings", cell: "w-[30px]", caret: true, art: <><path d="M0 1h16v11H0z" fill="#fff" /><path d="M2 3h12v7H2z" fill="#a9c3ea" /><path d="M5 15h6v-3H5z" fill="#fff" /></> },
  { name: "Grid and Snaps", cell: "w-[31px]", caret: true, art: <path d="M1 1h14v14H1zM4.500 1v14M8 1v14M11.500 1v14M1 4.500h14M1 8h14M1 11.500h14" fill="#fff" stroke="#555" /> },
  { name: "Viewports", cell: "w-[29px]", caret: true, art: <path d="M.5 2h7v5.500h-7zM8.500 2h7v5.500h-7zM.5 8.500h7V14h-7zM8.500 8.500h7V14h-7z" fill="#a9c3ea" /> },
];

function NavBar() {
  return (
    <div className="absolute left-[842px] bottom-[6px] flex items-center h-6 px-[3px] bg-[#f1f1f1] text-[#333]">
      {navTools.map((tool) => (
        <button key={tool.name} aria-label={tool.name} className={`flex items-center gap-[3px] ${tool.cell}`}>
          <svg viewBox="0 0 16 16" className="w-4 h-4 shrink-0" fill="none" stroke="#3d4652" strokeWidth="1.2">{tool.art}</svg>
          {tool.caret && <Caret />}
        </button>
      ))}
    </div>
  );
}

/* ---------- timeline ---------- */

const features: Record<string, ReactNode> = {
  sketch: (
    <>
      <path d="M5 2.500h8M2.500 5v8M15.500 5v5M5 15.500h4" stroke="#555" fill="none" />
      <path d="M1 1h3v3H1zM14 1h3v3h-3zM1 14h3v3H1z" fill="#1f8fe8" />
      <path d="M10 17l1-4 3-3 2 2-3 4z" fill="#f5b93c" />
      <path d="M14 10l1.500-2 2 2L16 12z" fill="#e64545" />
    </>
  ),
  extrude: (
    <>
      <path d="M1 15h9l3-3v2l-3 3H1z" fill="#a9a9a9" />
      <path d="M1 4l3-3h9l-3 3z" fill="#8dceff" />
      <path d="M1 4h9v10H1z" fill="#5da6df" />
      <path d="M10 4l3-3v10l-3 3z" fill="#3579b3" />
      <path d="M15.500 3v12" stroke="#333" />
      <path d="M14 4h3l-1.500-3z" fill="#333" />
    </>
  ),
  move: (
    <>
      <path d="M9 3v12M3 9h12" stroke="#333" strokeWidth="1.4" />
      <path d="M9 1l2.500 3.500h-5zM9 17l2.500-3.500h-5zM1 9l3.500-2.500v5zM17 9l-3.500-2.500v5z" fill="#333" />
    </>
  ),
  part: (
    <>
      <path d="M2 6l5-5h4l5 5v8l-3 3H2z" fill="#c7cad0" stroke="#555" strokeWidth="1.2" />
      <path d="M7 2h4l4 4-2 3-3-4H4z" fill="#e6e8ec" />
      <path d="M13 9l3-3v8l-3 3z" fill="#a4a8b0" />
    </>
  ),
  linked: (
    <>
      <path d="M1 5l3-4h12v12l-3 4H1z" fill="#cfcfcf" stroke="#777" strokeWidth="1.2" />
      <path d="M5 11l3-3M9 10l3-3" stroke="#777" strokeWidth="4" strokeLinecap="round" />
      <path d="M5 11l3-3M9 10l3-3" stroke="#ddd" strokeWidth="1.5" strokeLinecap="round" />
    </>
  ),
  remove: (
    <>
      <path d="M1 1l6 6M7 1L1 7" stroke="#c4161c" strokeWidth="2" />
      <path d="M7 10l3-3h7v7l-3 3H7z" fill="#8cc6ee" stroke="#2d5f88" />
      <path d="M7 10h7v7M14 10l3-3" fill="none" stroke="#2d5f88" />
    </>
  ),
  fillet: (
    <>
      <path d="M1 5l3-4h5c4 0 8 4 8 9v4l-3 3H1z" fill="#dcdcdc" stroke="#666" strokeWidth="1.2" />
      <path d="M7 5l3-4c4 0 7 4 7 8l-3 2c0-3-3-6-7-6z" fill="#4d9bd8" />
    </>
  ),
  chamfer: (
    <>
      <path d="M1 9l7-8h5l4 5v8l-3 3H1z" fill="#dcdcdc" stroke="#666" strokeWidth="1.2" />
      <path d="M2 9l6-8 4 2-5 8z" fill="#5da6df" />
    </>
  ),
  thread: (
    <>
      <path d="M4 1h10v4H4zM4 14h10v3H4z" fill="#ddd" stroke="#888" />
      <path d="M3 8l12-3M3 12l12-4M3 15l12-3" stroke="#3a9be4" strokeWidth="1.6" />
    </>
  ),
  copy: (
    <>
      <rect x="1" y="1" width="6" height="8" rx="2" fill="#fff" stroke="#444" strokeWidth="1.2" />
      <rect x="10" y="8" width="6" height="9" rx="2" fill="#fff" stroke="#444" strokeWidth="1.2" />
      <path d="M4 11v4h3" fill="none" stroke="#1f7fd0" strokeWidth="1.5" />
      <path d="M6 12.500l3 2.500-3 2.500z" fill="#1f7fd0" />
    </>
  ),
  shell: (
    <>
      <path d="M5 2h11v11" fill="none" stroke="#4d9bd8" strokeWidth="2" />
      <path d="M2 5h11v12H2zM5 8h5v6H5z" fill="#f3f3f3" stroke="#555" strokeWidth="1.2" />
    </>
  ),
  split: (
    <>
      <path d="M2 3l2-2h11v5l-2 2H2z" fill="#4d9bd8" />
      <path d="M2 12h11l2-2v5l-2 2H2z" fill="#d5d5d5" stroke="#666" />
      <path d="M1 10h12l4-4" fill="none" stroke="#1f9bf0" />
    </>
  ),
};

const timeline = (
  "part linked remove move move sketch extrude extrude fillet extrude extrude thread thread sketch extrude chamfer " +
  "sketch extrude copy move shell thread sketch extrude sketch extrude fillet sketch extrude extrude sketch extrude " +
  "chamfer sketch extrude extrude sketch extrude sketch extrude extrude sketch extrude sketch split shell sketch extrude sketch"
).split(" ");

const playback: { name: string; path: string }[] = [
  { name: "Go to start", path: "M2 1h2v14H2zM14 2v12L5 8z" },
  { name: "Step back", path: "M10 2v12L1 8zM11 5h2v6h-2z" },
  { name: "Play", path: "M3 1l11 7-11 7z" },
  { name: "Step forward", path: "M5 2v12l9-6zM2 5h2v6H2z" },
  { name: "Go to end", path: "M12 1h2v14h-2zM2 2v12l9-6z" },
];

function Timeline() {
  return (
    <footer className="flex h-[54px] shrink-0 bg-[#f1f1f1] border-t border-t-[#d6d6d6] border-b-2 border-b-[#4a4a4a]">
      <div className="flex gap-[9px] w-[142px] shrink-0 pt-[16px] pl-[9px]">
        {playback.map((item) => (
          <button key={item.name} aria-label={item.name} className="w-4 h-4">
            <svg viewBox="0 0 16 16" className="w-4 h-4" fill="#454545"><path d={item.path} /></svg>
          </button>
        ))}
      </div>
      <div className="relative pt-[7px]">
        <div className="h-[6px] mx-[2px] bg-[#e38fe3]" />
        <ol className="flex">
          {timeline.map((name, i) => {
            const last = i === timeline.length - 1;
            return (
              <li key={i} className="w-6 shrink-0">
                <button
                  aria-label={name}
                  className={`flex items-center justify-center w-6 h-5 ${last ? "bg-[#0a96d8]" : ""}`}
                >
                  <svg viewBox="0 0 18 18" className="w-[18px] h-[18px]">{features[name]}</svg>
                </button>
                {i > 1 && (
                  <div className={`h-[7px] pt-px border-b-2 border-[#c6c6c6] ${last ? "w-[13px]" : ""}`}>
                    <div className="w-[2px] h-[5px] ml-[11px] bg-[#c6c6c6]" />
                  </div>
                )}
              </li>
            );
          })}
        </ol>
        <svg viewBox="0 0 32 12" className="absolute left-[5px] top-[33px] w-8 h-3">
          <path d="M8 7h22V0" fill="none" stroke="#8e8e8e" strokeWidth="2" />
          <rect x="1" y="2" width="9" height="9" rx="2" fill="#c9ccd2" stroke="#8a8f98" />
          <path d="M3 6.500h5" stroke="#222" strokeWidth="1.5" />
        </svg>
        <svg viewBox="0 0 12 33" className="absolute -right-[6px] top-[9px] w-3 h-[33px]" fill="#5a5a5a">
          <path d="M0 0h12v4L7 9v24H5V9L0 4z" />
        </svg>
      </div>
      <button aria-label="Timeline settings" className="ml-auto mr-[13px] mb-[3px] text-[#7c7c7c]"><FaGear className="w-4 h-4" /></button>
    </footer>
  );
}

/* ---------- page ---------- */

export default function App() {
  return (
    <div className="flex flex-col h-screen overflow-hidden bg-[#f1f1f1] font-['Liberation_Sans',Arial,sans-serif]">
      <TitleBar />
      <QuickBar />
      <Ribbon />
      <main className="relative flex-1 mt-[3px] overflow-hidden bg-white">
        <Scene />
        <BrowserPanel />
        <ExtrudePanel />
        <div className="absolute left-[1092px] top-[603px] flex items-center h-[23px] bg-[#f1f1f1]">
          <span className="w-2 h-[18px] mx-[3px] border-r-2 border-[#d0d0d0] border-dotted" />
          <input aria-label="Distance value" defaultValue="-2 mm" className="w-[69px] h-5 bg-white border border-[#c6c6c6] text-[11px] text-center text-[#222]" />
          <button aria-label="More" className="flex flex-col items-center gap-[3px] w-6">
            <span className="w-[3px] h-[3px] rounded-full bg-[#777]" />
            <span className="w-[3px] h-[3px] rounded-full bg-[#777]" />
            <span className="w-[3px] h-[3px] rounded-full bg-[#777]" />
          </button>
        </div>
        <div role="tooltip" className="absolute left-[1461px] top-[533px] px-1 bg-[#f1f1f1] border-b border-[#777] text-[12px] leading-[18px] text-black font-['Open_Sans','Noto_Sans',sans-serif] whitespace-nowrap">
          Hold Ctrl to modify selection
        </div>
        <div className="absolute left-1 bottom-1 flex items-center w-[300px] h-[25px] pl-6 pr-[11px] bg-[#f1f1f1] border border-t-0 border-[#c6c6c6] text-[11px]">
          <h2 className="pt-px font-[Roboto,Arial,sans-serif] text-[#5c5c5c]">COMMENTS</h2>
          <button aria-label="Expand comments" className="ml-auto">
            <svg viewBox="0 0 10 10" className="w-[10px] h-[10px]"><circle cx="5" cy="5" r="5" fill="#2b2b2b" /><path d="M2 5h6M5 2v6" stroke="#fff" strokeWidth="1.5" /></svg>
          </button>
        </div>
        <NavBar />
      </main>
      <Timeline />
    </div>
  );
}
